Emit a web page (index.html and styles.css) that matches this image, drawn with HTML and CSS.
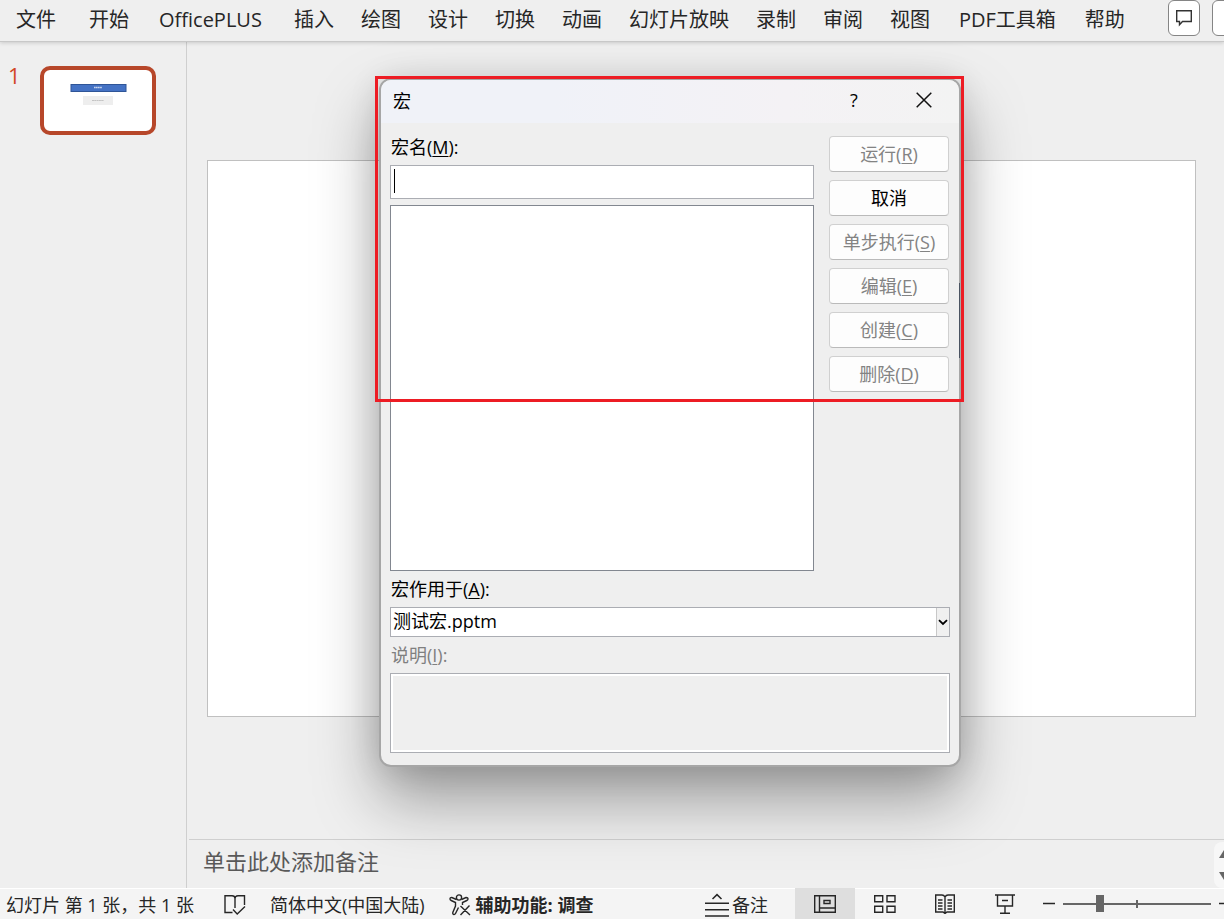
FILE: index.html
```html
<!DOCTYPE html>
<html lang="zh-CN">
<head>
<meta charset="utf-8">
<title>测试宏.pptm</title>
<link rel="stylesheet" href="styles.css">
</head>
<body>
<div class="app">
  <header class="ribbon">
    <nav class="tabs">
      <button class="tab tab-file">文件</button>
      <button class="tab">开始</button>
      <button class="tab tab-wide">OfficePLUS</button>
      <button class="tab">插入</button>
      <button class="tab">绘图</button>
      <button class="tab">设计</button>
      <button class="tab">切换</button>
      <button class="tab">动画</button>
      <button class="tab">幻灯片放映</button>
      <button class="tab">录制</button>
      <button class="tab">审阅</button>
      <button class="tab">视图</button>
      <button class="tab tab-tools">PDF工具箱</button>
      <button class="tab">帮助</button>
    </nav>
    <div class="ribbon-actions">
      <button class="action" aria-label="批注">
        <svg width="18" height="18" viewBox="0 0 18 18" fill="none" stroke="#333" stroke-width="1.4"><path d="M1.7 1.7H16.3V12.5H7.5L4.5 15.8V12.5H1.7Z"/></svg>
      </button>
      <button class="action" aria-label="共享"></button>
    </div>
  </header>

  <main class="workspace">
    <aside class="thumbs">
      <span class="thumb-number">1</span>
      <button class="thumb" aria-label="幻灯片 1">
        <svg width="108" height="61" viewBox="0 0 108 61">
          <rect x="27" y="14.5" width="55" height="7" fill="#4472c4" stroke="#2f5597"/>
          <path d="M50 17.5h8" stroke="#c9d6ef" stroke-width="1.5" stroke-dasharray="1.5 .3"/>
          <rect x="39" y="26" width="30" height="9" fill="#eee"/>
          <path d="M48 30.5h12" stroke="#c4c4c4" stroke-width="1" stroke-dasharray="2 .3"/>
        </svg>
      </button>
    </aside>
    <section class="editor">
      <div class="canvas"><div class="slide"></div></div>
      <div class="notes">单击此处添加备注
        <div class="slide-steps">
          <svg width="10" height="46" viewBox="0 0 10 46" fill="#666"><path d="M5 16L10 8V16ZM5 30L10 38V30Z"/></svg>
        </div>
      </div>
    </section>

    <form class="dialog" role="dialog" aria-labelledby="dialog-title">
      <div class="titlebar">
        <span class="title" id="dialog-title">宏</span>
        <button type="button" class="title-button" aria-label="帮助">?</button>
        <button type="button" class="title-button" aria-label="关闭">
          <svg width="16" height="16" viewBox="0 0 16 16" stroke="#111" stroke-width="1.5"><path d="M.7 .7L15.3 15.3M15.3 .7L.7 15.3"/></svg>
        </button>
      </div>
      <div class="dialog-body">
        <div class="macro-area">
          <div class="macro-fields">
            <label class="field-label" for="macro-name">宏名(<u>M</u>):</label>
            <div class="name-box">
              <input class="name-input" id="macro-name" type="text">
              <span class="caret"></span>
            </div>
            <select class="macro-list" size="10" aria-label="宏列表"></select>
          </div>
          <div class="commands">
            <button type="button" class="command" disabled>运行(<u>R</u>)</button>
            <button type="button" class="command">取消</button>
            <button type="button" class="command" disabled>单步执行(<u>S</u>)</button>
            <button type="button" class="command" disabled>编辑(<u>E</u>)</button>
            <button type="button" class="command" disabled>创建(<u>C</u>)</button>
            <button type="button" class="command" disabled>删除(<u>D</u>)</button>
          </div>
        </div>
        <label class="field-label" for="macro-in">宏作用于(<u>A</u>):</label>
        <div class="combo">
          <select class="combo-select" id="macro-in"><option>测试宏.pptm</option></select>
          <span class="combo-arrow">
            <svg width="10" height="7" viewBox="0 0 10 7" fill="none" stroke="#000" stroke-width="1.8"><path d="M1 1.2L5 5L9 1.2"/></svg>
          </span>
        </div>
        <label class="field-label muted" for="macro-desc">说明(<u>I</u>):</label>
        <textarea class="description" id="macro-desc" disabled></textarea>
      </div>
      <span class="scroll-trace"></span>
      <span class="highlight"></span>
    </form>
  </main>

  <footer class="status">
    <span class="status-text">幻灯片 第 1 张，共 1 张</span>
    <button class="status-button proof" aria-label="拼写检查">
      <svg width="22" height="22" viewBox="0 0 22 22" fill="none" stroke="#262626" stroke-width="1.4"><path d="M8.5 18.5H1V1.8H8Q11 1.8 11 4.5V14M11 4.5Q11 1.8 14 1.8H20.5V11M9 15.5L13.2 20L21 12.5"/></svg>
    </button>
    <button class="status-button language">简体中文(中国大陆)</button>
    <button class="status-button access">
      <svg width="22" height="22" viewBox="0 0 22 22" fill="none" stroke="#262626" stroke-width="1.4"><circle cx="10" cy="3.5" r="2.6"/><path d="M7.5 5.5L2.8 3.5Q1 3.4 1 5Q1 6 2.2 6.5L6.5 8.5V12L3.8 18.5Q3.5 20.5 5 20.5Q6 20.5 6.5 19.5L9.5 13.5M12.5 5.5L17 3.5Q19 3.4 19 5Q19 6 17.8 6.5L13.5 8.5V11M11.5 12L21 21M20.5 11.5L11.5 21"/></svg>
      <b>辅助功能: 调查</b>
    </button>
    <div class="views">
      <button class="status-button notes-toggle">
        <svg width="24" height="24" viewBox="0 0 24 24" fill="none" stroke="#262626" stroke-width="1.5"><path d="M0 10.2H24M0 16.7H24M0 23H24M7.5 6L12 1.6L16.5 6"/></svg>
        备注
      </button>
      <button class="view active" aria-label="普通视图">
        <svg width="22" height="18" viewBox="0 0 22 18" fill="none" stroke="#262626" stroke-width="1.4"><path d="M.7 .7H21.3V17.3H.7ZM5.5 .7V17.3M5.5 13H21.3M10 5.5H16V8.5H10Z"/></svg>
      </button>
      <button class="view" aria-label="幻灯片浏览">
        <svg width="22" height="18" viewBox="0 0 22 18" fill="none" stroke="#262626" stroke-width="1.4"><path d="M.7 .7H8.7V6.7H.7ZM13 .7H21V6.7H13ZM.7 11.3H8.7V17.3H.7ZM13 11.3H21V17.3H13Z"/></svg>
      </button>
      <button class="view" aria-label="阅读视图">
        <svg width="20" height="20" viewBox="0 0 20 20" fill="none" stroke="#262626" stroke-width="1.4"><path d="M10 3Q9 1 7 1H.7V18H8L10 19.5L12 18H19.3V1H13Q11 1 10 3V19M3 6H7.5M3 9H7.5M3 12H7.5M3 15H7.5M12.5 6H17M12.5 9H17M12.5 12H17M12.5 15H17"/></svg>
      </button>
      <button class="view" aria-label="幻灯片放映">
        <svg width="20" height="20" viewBox="0 0 20 20" fill="none" stroke="#262626" stroke-width="1.4"><path d="M0 1H20M2.5 1V12H17.5V1M10 12V19M5 19.2H15M7 6.5H13"/></svg>
      </button>
      <div class="zoom">
        <svg width="188" height="20" viewBox="0 0 188 20"><path d="M0 9.5H12M176 9.5H188" stroke="#262626" stroke-width="1.3"/><path d="M20 10H168M94 6V14" stroke="#666" stroke-width="2"/><rect x="53" y="1" width="8" height="17" fill="#666"/></svg>
      </div>
    </div>
  </footer>
</div>
</body>
</html>
```
FILE: styles.css
```css
* { box-sizing: border-box; }

body {
  margin: 0;
  background: #efefef;
  color: #262626;
  font-family: "Open Sans", "Noto Sans CJK SC", sans-serif;
  font-size: 18px;
}

button, input, select, textarea {
  font: inherit;
  color: inherit;
}

button {
  padding: 0;
  border: 0;
  background: none;
  white-space: nowrap;
}

svg { display: block; flex: none; }

.app {
  display: flex;
  flex-direction: column;
  height: 100vh;
  overflow: hidden;
}

/* Ribbon tabs */
.ribbon {
  display: flex;
  justify-content: space-between;
  height: 42px;
  flex: none;
  border-bottom: 1px solid #c8c8c8;
  box-shadow: 0 1px 4px rgba(0, 0, 0, .16);
  position: relative;
  z-index: 1;
}

.tabs {
  display: flex;
  gap: 27px;
  padding-left: 16px;
  font-size: 20px;
  line-height: 40px;
}

.tab { height: 40px; }
.tab-file { margin-right: 6px; }
.tab-wide { margin: 0 5px 0 3px; }
.tab-tools { margin: 0 2px; }

.ribbon-actions {
  display: flex;
  gap: 12px;
  width: 56px;
  overflow: hidden;
}

.action {
  display: grid;
  place-items: center;
  flex: none;
  width: 32px;
  height: 36px;
  border: 1px solid #858585;
  border-radius: 6px;
  background: #fff;
}

/* Workspace */
.workspace {
  display: flex;
  flex: 1;
  min-height: 0;
  position: relative;
}

.thumbs {
  display: flex;
  align-items: flex-start;
  gap: 20px;
  width: 187px;
  padding: 24px 0 0 8px;
  border-right: 1px solid #cfcfcf;
}

.thumb-number {
  width: 12px;
  color: #d24726;
  font-size: 22px;
  line-height: 18px;
}

.thumb {
  border: 4px solid #b7472a;
  border-radius: 10px;
  background: #fff;
}

.editor {
  display: flex;
  flex-direction: column;
  flex: 1;
  min-width: 0;
}

.canvas {
  display: flex;
  align-items: center;
  flex: 1;
  padding: 0 28px 4px 20px;
}

.slide {
  width: 100%;
  aspect-ratio: 16 / 9;
  border: 1px solid #c0c0c0;
  background: #fff;
}

.notes {
  position: relative;
  height: 49px;
  margin-left: 2px;
  padding-left: 14px;
  border-top: 1px solid #cfcfcf;
  color: #595959;
  font-size: 22px;
  line-height: 42px;
}

.slide-steps {
  position: absolute;
  top: 2px;
  right: 0;
  border-radius: 8px 0 0 8px;
  background: #f7f7f7;
}

/* Macro dialog */
.dialog {
  position: absolute;
  top: 36px;
  left: 379px;
  width: 582px;
  border: 2px solid #a6a6a6;
  border-radius: 12px;
  background: #efefef;
  background-clip: padding-box;
  box-shadow: 0 32px 64px rgba(0, 0, 0, .36), 0 2px 32px rgba(0, 0, 0, .12);
  color: #000;
}

.titlebar {
  display: flex;
  align-items: center;
  height: 43px;
  padding: 0 0 4px 12px;
  border-radius: 10px 10px 0 0;
  background: linear-gradient(90deg, #f0f2f8 30%, #f4f2f5 70%, #f3f3f3);
}

.title { flex: 1; }

.title-button {
  display: grid;
  place-items: center;
  width: 70px;
  height: 38px;
}

.dialog-body {
  display: flex;
  flex-direction: column;
  padding: 6px 9px 12px;
}

.macro-area {
  display: grid;
  grid-template-columns: 1fr 120px;
  gap: 15px;
  padding-right: 1px;
}

.macro-fields {
  display: flex;
  flex-direction: column;
}

.field-label {
  display: block;
  height: 36px;
  padding-left: 1px;
  line-height: 36px;
}

.muted { color: #808080; }

u {
  text-decoration-thickness: 1px;
  text-underline-offset: 2px;
}

.name-box {
  position: relative;
  height: 34px;
  margin-bottom: 6px;
}

.name-input {
  width: 100%;
  height: 34px;
  padding: 0 4px;
  border: 1px solid #abadb3;
  background: #fff;
  outline: 0;
}

.caret {
  position: absolute;
  top: 4px;
  left: 4px;
  width: 1px;
  height: 24px;
  background: #000;
}

.macro-list {
  height: 366px;
  border: 1px solid #828790;
  border-radius: 0;
  background: #fff;
  outline: 0;
}

.commands {
  display: flex;
  flex-direction: column;
  gap: 8px;
  padding-top: 7px;
}

.command {
  height: 36px;
  padding-bottom: 2px;
  border: 1px solid #d0d0d0;
  border-bottom-color: #bababa;
  border-radius: 4px;
  background: #fdfdfd;
}

.command:disabled { color: #838383; }

.combo {
  position: relative;
  height: 30px;
}

.combo-select {
  appearance: none;
  width: 100%;
  height: 30px;
  padding: 0 16px 2px 2px;
  border: 1px solid #abadb3;
  border-radius: 0;
  background: #fff;
}

.combo-arrow {
  position: absolute;
  top: 1px;
  right: 1px;
  bottom: 1px;
  display: grid;
  place-items: center;
  width: 13px;
  border-left: 1px solid #c8c8c8;
  background: #f0f0f0;
  pointer-events: none;
}

.description {
  height: 80px;
  border: 1px solid #abadb3;
  background: #efefef;
  box-shadow: inset 0 0 0 2px #fff;
  resize: none;
}

.scroll-trace {
  position: absolute;
  top: 203px;
  right: -1px;
  width: 1px;
  height: 75px;
  background: #4a5361;
}

.highlight {
  position: absolute;
  top: -4px;
  left: -6px;
  right: -5px;
  height: 326px;
  border: 3px solid #ed1c24;
  pointer-events: none;
}

/* Status bar */
.status {
  display: flex;
  align-items: center;
  flex: none;
  height: 31px;
  padding-left: 6px;
  border-top: 1px solid #fff;
  background: #f4f4f4;
  line-height: 32px;
  white-space: nowrap;
  position: relative;
  z-index: 1;
}

.status > *,
.notes-toggle { padding-top: 1px; }

.status > .views { padding-top: 0; }

.status-button {
  display: flex;
  align-items: center;
  gap: 5px;
  height: 32px;
}

.proof { margin-left: 30px; }
.language { margin-left: 24px; }
.access { margin-left: 24px; }

.views {
  display: flex;
  align-items: center;
  margin-left: auto;
}

.notes-toggle { gap: 3px; margin-right: 27px; }

.view {
  display: grid;
  place-items: center;
  width: 60px;
  height: 32px;
}

.active { background: #dedede; }

.zoom {
  width: 189px;
  padding-left: 8px;
  overflow: hidden;
}
```
